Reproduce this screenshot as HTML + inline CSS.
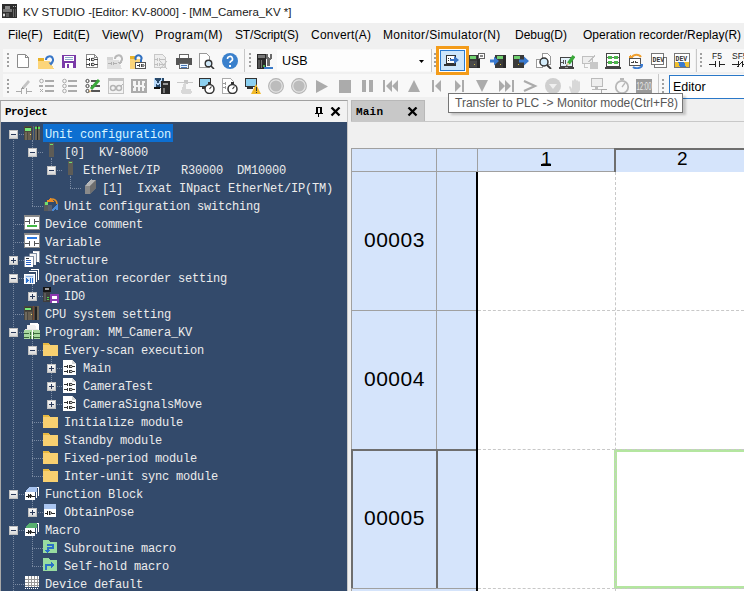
<!DOCTYPE html>
<html><head><meta charset="utf-8">
<style>
*{box-sizing:border-box;margin:0;padding:0}
html,body{width:744px;height:591px;overflow:hidden;background:#f0f0f0;font-family:"Liberation Sans",sans-serif;position:relative}
.a{position:absolute}
.t{position:absolute;white-space:pre;font-family:"Liberation Sans",sans-serif;font-size:12px;color:#000;line-height:14px;transform-origin:0 0}
#title{left:0;top:0;width:744px;height:23px;background:#fff}
#menu{left:0;top:23px;width:744px;height:25px;background:#f0f0f0}
.tb{position:absolute;background:#f8f8f8}
.grip{position:absolute;width:2px;height:2px;background:#9a9a9a;box-shadow:0 4px #9a9a9a,0 8px #9a9a9a,0 12px #9a9a9a}
.sep{position:absolute;width:1px;background:#c8c8c8}
.ic{position:absolute;width:16px;height:16px}
#tree{left:1px;top:122px;width:346px;height:469px;background:#334a6b}
.tr{position:absolute;white-space:pre;font-family:"Liberation Mono",monospace;font-size:12px;letter-spacing:-0.2px;color:#ececec;line-height:23px;height:23px}
.bx{position:absolute;width:9px;height:9px;background:linear-gradient(#fafafa,#d8d8d8);border:1px solid #c0c0c0}
.bx::after{content:"";position:absolute;left:1px;top:3px;width:5px;height:1px;background:#2a3a5a}
.bx.p::before{content:"";position:absolute;left:3px;top:1px;width:1px;height:5px;background:#2a3a5a}
.sel{color:#d8f4ff}
.vl{position:absolute;width:1px;border-left:1px dotted #7a8aa2}
.hl{position:absolute;height:1px;border-top:1px dotted #7a8aa2}
</style></head><body>
<!-- title bar -->
<div id="title" class="a"></div>
<svg class="a" style="left:2px;top:4px" width="15" height="14" viewBox="0 0 15 14" shape-rendering="crispEdges"><rect width="15" height="14" fill="#2e2e2e"/><rect x="3" y="2" width="5" height="3" fill="#8a8a8a"/><rect x="1" y="5" width="9" height="3" fill="#777"/><rect x="1" y="9" width="2" height="4" fill="#666"/><rect x="4" y="9" width="3" height="4" fill="#5a5a5a"/><rect x="1" y="10" width="2" height="2" fill="#ddd"/><rect x="11" y="2" width="1" height="1" fill="#bbb"/><rect x="13" y="2" width="1" height="1" fill="#bbb"/><rect x="11" y="5" width="1" height="8" fill="#6a6a6a"/><rect x="13" y="5" width="1" height="8" fill="#5a5a5a"/></svg>
<div class="t" style="left:23px;top:5px;font-size:11.5px;color:#1a1a1a">KV STUDIO -[Editor: KV-8000] - [MM_Camera_KV *]</div>

<!-- menu -->
<div id="menu" class="a"></div>
<div class="t" style="left:8px;top:28px">File(F)</div>
<div class="t" style="left:53px;top:28px">Edit(E)</div>
<div class="t" style="left:102px;top:28px">View(V)</div>
<div class="t" style="left:155px;top:28px;letter-spacing:0.4px">Program(M)</div>
<div class="t" style="left:235px;top:28px;letter-spacing:-0.14px">ST/Script(S)</div>
<div class="t" style="left:311px;top:28px;letter-spacing:0.22px">Convert(A)</div>
<div class="t" style="left:383px;top:28px;letter-spacing:0.35px">Monitor/Simulator(N)</div>
<div class="t" style="left:515px;top:28px">Debug(D)</div>
<div class="t" style="left:583px;top:28px">Operation recorder/Replay(R)</div>

<!-- toolbars -->
<div class="tb" style="left:3px;top:49px;width:241px;height:23px"></div>
<div class="tb" style="left:245px;top:49px;width:186px;height:23px"></div>
<div class="tb" style="left:432px;top:49px;width:263px;height:23px"></div>
<div class="tb" style="left:697px;top:49px;width:47px;height:23px"></div>
<div class="tb" style="left:3px;top:74px;width:655px;height:23px"></div>
<div class="tb" style="left:659px;top:74px;width:85px;height:23px"></div>

<!--ICONS-->
<div class="a" style="left:7px;top:53px;width:2px;height:2px;background:#a0a0a0"></div><div class="a" style="left:7px;top:57px;width:2px;height:2px;background:#a0a0a0"></div><div class="a" style="left:7px;top:61px;width:2px;height:2px;background:#a0a0a0"></div><div class="a" style="left:7px;top:65px;width:2px;height:2px;background:#a0a0a0"></div>
<div class="a" style="left:7px;top:79px;width:2px;height:2px;background:#a0a0a0"></div><div class="a" style="left:7px;top:83px;width:2px;height:2px;background:#a0a0a0"></div><div class="a" style="left:7px;top:87px;width:2px;height:2px;background:#a0a0a0"></div><div class="a" style="left:7px;top:91px;width:2px;height:2px;background:#a0a0a0"></div>
<div class="a" style="left:244px;top:49px;width:1px;height:23px;background:#c8c8c8"></div>
<div class="a" style="left:249px;top:53px;width:2px;height:2px;background:#a0a0a0"></div><div class="a" style="left:249px;top:57px;width:2px;height:2px;background:#a0a0a0"></div><div class="a" style="left:249px;top:61px;width:2px;height:2px;background:#a0a0a0"></div><div class="a" style="left:249px;top:65px;width:2px;height:2px;background:#a0a0a0"></div>
<div class="a" style="left:431px;top:49px;width:1px;height:23px;background:#c8c8c8"></div>
<div class="a" style="left:434px;top:53px;width:2px;height:2px;background:#a0a0a0"></div><div class="a" style="left:434px;top:57px;width:2px;height:2px;background:#a0a0a0"></div><div class="a" style="left:434px;top:61px;width:2px;height:2px;background:#a0a0a0"></div><div class="a" style="left:434px;top:65px;width:2px;height:2px;background:#a0a0a0"></div>
<div class="a" style="left:696px;top:49px;width:1px;height:23px;background:#c8c8c8"></div>
<div class="a" style="left:700px;top:53px;width:2px;height:2px;background:#a0a0a0"></div><div class="a" style="left:700px;top:57px;width:2px;height:2px;background:#a0a0a0"></div><div class="a" style="left:700px;top:61px;width:2px;height:2px;background:#a0a0a0"></div><div class="a" style="left:700px;top:65px;width:2px;height:2px;background:#a0a0a0"></div>
<div class="a" style="left:658px;top:74px;width:1px;height:23px;background:#c8c8c8"></div>
<div class="a" style="left:662px;top:79px;width:2px;height:2px;background:#a0a0a0"></div><div class="a" style="left:662px;top:83px;width:2px;height:2px;background:#a0a0a0"></div><div class="a" style="left:662px;top:87px;width:2px;height:2px;background:#a0a0a0"></div><div class="a" style="left:662px;top:91px;width:2px;height:2px;background:#a0a0a0"></div>
<svg class="a" style="left:16px;top:53px" width="16" height="16" viewBox="0 0 16 16" shape-rendering="crispEdges"><path d="M1.5 1.5h8l3 3v10h-11z" fill="#fff" stroke="#8a8a8a" shape-rendering="auto"/><path d="M9.5 1.5v3h3" fill="none" stroke="#8a8a8a"/></svg>
<svg class="a" style="left:38px;top:53px" width="16" height="16" viewBox="0 0 16 16" shape-rendering="crispEdges"><path d="M0 5h5l1 1v10H0z" fill="#e8b228"/><path d="M0 8h12l4 8H0z" fill="#fcd57a"/><path d="M8 7a3.5 3.5 0 1 1 5 3" fill="none" stroke="#3876c8" stroke-width="2" shape-rendering="auto"/><path d="M10.5 9.5h5l-2.5 3z" fill="#3876c8" shape-rendering="auto"/></svg>
<svg class="a" style="left:62px;top:53px" width="16" height="16" viewBox="0 0 16 16" shape-rendering="crispEdges"><rect x="0" y="2" width="14" height="13" fill="#7a3aa8"/><rect x="2" y="3" width="10" height="5" fill="#fff"/><rect x="3" y="4" width="8" height="1" fill="#8aa8c8"/><rect x="3" y="6" width="8" height="1" fill="#8aa8c8"/><rect x="3" y="10" width="8" height="5" fill="#fff"/><rect x="5" y="11" width="2" height="4" fill="#7a3aa8"/></svg>
<svg class="a" style="left:85px;top:53px" width="16" height="16" viewBox="0 0 16 16" shape-rendering="crispEdges"><path d="M1.5 1.5h8l3 3v10h-11z" fill="#fff" stroke="#8a8a8a"/><path d="M9.5 1.5v3h3" fill="none" stroke="#8a8a8a"/><path d="M1 6h3M4 5v3M6 5v3M6 6h1M9 6h4M1 11h3M4 10v3M6 10v3M6 11h1M9 11h4" stroke="#444"/><circle cx="8" cy="6.5" r="1.3" fill="none" stroke="#444" shape-rendering="auto"/><circle cx="8" cy="11.5" r="1.3" fill="none" stroke="#444" shape-rendering="auto"/></svg>
<svg class="a" style="left:107px;top:53px" width="16" height="16" viewBox="0 0 16 16" shape-rendering="crispEdges"><path d="M0 4h5l1 1v11H0z" fill="#d4d4d4"/><path d="M0 7h12l3 9H0z" fill="#e0e0e0"/><path d="M8 6a3.5 3.5 0 1 1 5 3" fill="none" stroke="#b8b8b8" stroke-width="2" shape-rendering="auto"/><path d="M10.5 8.5h5l-2.5 3z" fill="#b8b8b8"/><path d="M1 10h3M4 9v3M6 9v3M6 10h4" stroke="#b0b0b0"/></svg>
<svg class="a" style="left:130px;top:53px" width="16" height="16" viewBox="0 0 16 16" shape-rendering="crispEdges"><path d="M0 3h4l1 1v10H0z" fill="#e8b228"/><path d="M0 6h10v10H0z" fill="#fcd57a"/><path d="M6 7a3 3 0 1 1 5 0v3" fill="none" stroke="#3070c0" stroke-width="2" shape-rendering="auto"/><rect x="5.5" y="9.5" width="10" height="6" fill="#fff" stroke="#555"/><path d="M7 12.5h2M9 11v3M11 11v3" stroke="#444"/><circle cx="13" cy="12.5" r="1" fill="none" stroke="#444" shape-rendering="auto"/></svg>
<svg class="a" style="left:153px;top:53px" width="16" height="16" viewBox="0 0 16 16" shape-rendering="crispEdges"><path d="M1.5 1.5h8l3 3v10h-11z" fill="#eee" stroke="#c8c8c8"/><path d="M1 6h3M4 5v3M6 5v3M6 6h6M1 11h3M4 10v3M6 10v3M6 11h6" stroke="#c0c0c0"/><path d="M7 8l7 8M14 8l-7 8" stroke="#c0c0c0" shape-rendering="auto"/></svg>
<svg class="a" style="left:176px;top:53px" width="16" height="16" viewBox="0 0 16 16" shape-rendering="crispEdges"><rect x="3.5" y="1.5" width="9" height="4" fill="#fff" stroke="#666"/><rect x="0" y="5" width="16" height="7" fill="#555"/><rect x="3.5" y="10.5" width="9" height="5" fill="#e8f4ff" stroke="#666"/><path d="M5 12h6M5 14h6" stroke="#4a78b8"/></svg>
<svg class="a" style="left:199px;top:53px" width="16" height="16" viewBox="0 0 16 16" shape-rendering="crispEdges"><path d="M0.5 0.5h7l3 3v11h-10z" fill="#fff" stroke="#999"/><circle cx="9.5" cy="10.5" r="3.3" fill="#d0e8f8" stroke="#333" stroke-width="1.4" shape-rendering="auto"/><path d="M12 13l3 3" stroke="#333" stroke-width="1.6" shape-rendering="auto"/></svg>
<svg class="a" style="left:222px;top:53px" width="16" height="16" viewBox="0 0 16 16" shape-rendering="crispEdges"><circle cx="8" cy="8" r="8" fill="#3a80cc" shape-rendering="auto"/><path d="M5.5 6a2.5 2.5 0 1 1 3.5 2.2c-0.8 0.4-1 0.8-1 1.8" fill="none" stroke="#fff" stroke-width="1.6" shape-rendering="auto"/><rect x="7" y="11.5" width="2" height="2" fill="#fff"/></svg>
<svg class="a" style="left:257px;top:53px" width="16" height="16" viewBox="0 0 16 16" shape-rendering="crispEdges"><rect x="0" y="1" width="9" height="15" fill="#2a2a2a"/><rect x="1" y="2" width="7" height="3" fill="#777"/><rect x="1" y="7" width="2" height="8" fill="#555"/><rect x="4" y="7" width="1" height="8" fill="#777"/><rect x="6" y="12" width="2" height="2" fill="#4caf50"/><path d="M9 1h2v3l1 1 1-1V1h2v4l-2 2v6h-3V7L9 5z" fill="#6a6a6a"/><rect x="7" y="14" width="9" height="2" fill="#3a7ac8"/></svg>
<div class="a" style="left:277px;top:50px;width:154px;height:21px;background:#fdfdfd"></div>
<div class="t" style="left:282px;top:54px;font-size:12.5px">USB</div>
<svg class="a" style="left:419px;top:60px" width="5" height="3" viewBox="0 0 5 3" shape-rendering="crispEdges"><path d="M0 0h5l-2.5 3z" fill="#000" shape-rendering="auto"/></svg>
<div class="a" style="left:436px;top:46px;width:33px;height:29px;border:3px solid #f39c1b;background:#fff"></div>
<div class="a" style="left:440px;top:50px;width:25px;height:21px;border:1px solid #2a7ad0;background:#cde6fb"></div>
<svg class="a" style="left:444px;top:54px" width="16" height="13" viewBox="0 0 16 13" shape-rendering="crispEdges"><rect x="2.5" y="1.5" width="9" height="8" fill="#fff" stroke="#333"/><rect x="0" y="10" width="12" height="2" fill="#333"/><path d="M4 4v1M4 6v1M6 4v1M6 6v1" stroke="#333"/><path d="M6 5h4V2l5 4-5 4V7H6z" fill="#3a74c4" shape-rendering="auto"/></svg>
<svg class="a" style="left:469px;top:53px" width="16" height="16" viewBox="0 0 16 16" shape-rendering="crispEdges"><rect x="0" y="2" width="11" height="13" fill="#3a3a3a"/><rect x="1" y="3" width="6" height="3" fill="#6fd06f"/><rect x="1" y="8" width="7" height="6" fill="#4a4a4a"/><rect x="5" y="11" width="1" height="1" fill="#d8c040"/><rect x="8" y="2" width="3" height="13" fill="#2a2a2a"/><rect x="9.5" y="0.5" width="6" height="5" rx="1" fill="#fff" stroke="#666"/><path d="M11 2h3M11 3.5h3" stroke="#888"/></svg>
<svg class="a" style="left:490px;top:53px" width="16" height="16" viewBox="0 0 16 16" shape-rendering="crispEdges"><rect x="5" y="2" width="11" height="13" fill="#3a3a3a"/><rect x="7" y="3" width="6" height="3" fill="#6fd06f"/><rect x="13" y="2" width="3" height="13" fill="#2a2a2a"/><rect x="10" y="11" width="1" height="1" fill="#d8c040"/><path d="M0 6.5h4V3.5l5 4.5-5 4.5V9.5H0z" fill="#3a7ad0" shape-rendering="auto"/></svg>
<svg class="a" style="left:513px;top:53px" width="16" height="16" viewBox="0 0 16 16" shape-rendering="crispEdges"><rect x="0" y="2" width="11" height="13" fill="#3a3a3a"/><rect x="1" y="3" width="6" height="3" fill="#6fd06f"/><rect x="5" y="11" width="1" height="1" fill="#d8c040"/><path d="M6 6.5h5V3.5l5 4.5-5 4.5V9.5H6z" fill="#3a7ad0" shape-rendering="auto"/></svg>
<svg class="a" style="left:536px;top:53px" width="16" height="16" viewBox="0 0 16 16" shape-rendering="crispEdges"><path d="M6.5 0.5h5l3 3v8h-8z" fill="#fff" stroke="#999"/><path d="M0.5 6.5h6v8h-6z" fill="#fff" stroke="#999"/><circle cx="8" cy="9" r="4" fill="#d4ecfa" stroke="#333" stroke-width="1.5" shape-rendering="auto"/><path d="M11 12l4 4" stroke="#333" stroke-width="1.8" shape-rendering="auto"/></svg>
<svg class="a" style="left:559px;top:53px" width="16" height="17" viewBox="0 0 16 17" shape-rendering="crispEdges"><rect x="1.5" y="4.5" width="12" height="9" fill="#e4f2fa" stroke="#444"/><path d="M2 9h2M4 7v4M6 7v4M6 9h1" stroke="#555"/><rect x="0" y="14" width="15" height="2" fill="#444"/><rect x="6" y="14" width="3" height="1" fill="#999"/><path d="M9.5 10.5L15 3" stroke="#3aa83a" stroke-width="3.5" shape-rendering="auto"/><path d="M7 13l1.5-3.5 2 1.8z" fill="#f0d0a0" shape-rendering="auto"/><path d="M7 13l0.8-1.6 0.9 0.8z" fill="#111" shape-rendering="auto"/></svg>
<svg class="a" style="left:582px;top:53px" width="16" height="16" viewBox="0 0 16 16" shape-rendering="crispEdges"><rect x="0.5" y="3.5" width="10" height="7" fill="#eee" stroke="#c0c0c0"/><path d="M6 9l6-7 1 1-6 7z" fill="#c0c0c0"/><rect x="8" y="9" width="8" height="7" fill="#c8c8c8"/><path d="M2 11v3h4" stroke="#c8c8c8" fill="none"/></svg>
<svg class="a" style="left:605px;top:53px" width="16" height="17" viewBox="0 0 16 17" shape-rendering="crispEdges"><rect x="1.5" y="0.5" width="13" height="13" fill="#fff" stroke="#444"/><rect x="0" y="14" width="16" height="2" fill="#444"/><path d="M2 4.5h12M2 9.5h12" stroke="#666"/><rect x="3" y="3" width="4" height="3" fill="#4cb84c"/><rect x="9" y="3" width="4" height="3" fill="#4cb84c"/><rect x="3" y="8" width="4" height="3" fill="#4cb84c"/><rect x="9" y="8" width="4" height="3" fill="#4cb84c"/></svg>
<svg class="a" style="left:628px;top:53px" width="16" height="16" viewBox="0 0 16 16" shape-rendering="crispEdges"><rect x="1.5" y="5.5" width="11" height="7" fill="#fff" stroke="#555"/><path d="M3 9h2M5 8v2M7 8v2M7 9h3" stroke="#444"/><path d="M4 4a5 4 0 0 1 9 0" fill="none" stroke="#f0a030" stroke-width="2" shape-rendering="auto"/><path d="M2 2l3 3H1z" fill="#f0a030"/><path d="M5 14a5 3 0 0 0 9-2" fill="none" stroke="#3a7ad0" stroke-width="2" shape-rendering="auto"/><path d="M12 11l3 0-1 3z" fill="#3a7ad0"/></svg>
<svg class="a" style="left:651px;top:53px" width="16" height="16" viewBox="0 0 16 16" shape-rendering="crispEdges"><rect x="3.5" y="4.5" width="12" height="10" fill="#fff" stroke="#777"/><rect x="0.5" y="0.5" width="12" height="11" fill="#fff" stroke="#777"/><text x="1.5" y="8.5" font-family="Liberation Mono" font-weight="bold" font-size="6.5" fill="#333">DEV</text></svg>
<svg class="a" style="left:674px;top:53px" width="16" height="16" viewBox="0 0 16 16" shape-rendering="crispEdges"><rect x="0.5" y="0.5" width="15" height="14" fill="#fff" stroke="#777"/><rect x="1" y="9" width="14" height="5" fill="#f0c030"/><path d="M4 9h6l2 5H6z" fill="#3a7ad0"/><text x="1.5" y="7.5" font-family="Liberation Mono" font-weight="bold" font-size="6.5" fill="#333">DEV</text></svg>
<svg class="a" style="left:709px;top:51px" width="16" height="18" viewBox="0 0 16 18" shape-rendering="crispEdges"><text x="3" y="7.5" font-family="Liberation Sans" font-size="8.5" fill="#222">F5</text><path d="M0 13h6M6 10v6M10 10v6M10 13h6" stroke="#222"/></svg>
<svg class="a" style="left:732px;top:51px" width="16" height="18" viewBox="0 0 16 18" shape-rendering="crispEdges"><text x="0" y="7.5" font-family="Liberation Sans" font-size="8.5" fill="#222">SF5</text><path d="M0 13h6M6 10v6M10 10v6M10 13h6M5 16l6-6" stroke="#222"/></svg>
<svg class="a" style="left:16px;top:78px" width="16" height="16" viewBox="0 0 16 16" shape-rendering="crispEdges"><path d="M6 9l6-7 2 2-6 7z" fill="#c4c4c4" shape-rendering="auto"/><path d="M5 11l1-2 2 2z" fill="#999"/><path d="M0 13h5M5 10v6M10 10v6M10 13h6" stroke="#ababab"/></svg>
<svg class="a" style="left:39px;top:78px" width="16" height="16" viewBox="0 0 16 16" shape-rendering="crispEdges"><circle cx="2.5" cy="3" r="1.8" fill="none" stroke="#ababab" shape-rendering="auto"/><rect x="6" y="2" width="9" height="2" fill="#ababab"/><rect x="0" y="7" width="4" height="2" fill="#ababab"/><rect x="6" y="7" width="9" height="2" fill="#ababab"/><path d="M1 11l3 3M4 11l-3 3" stroke="#ababab" shape-rendering="auto"/><rect x="6" y="12" width="9" height="2" fill="#ababab"/></svg>
<svg class="a" style="left:62px;top:78px" width="16" height="16" viewBox="0 0 16 16" shape-rendering="crispEdges"><circle cx="2.5" cy="3" r="1.8" fill="none" stroke="#ababab" shape-rendering="auto"/><rect x="6" y="2" width="9" height="2" fill="#ababab"/><circle cx="2.5" cy="8" r="1.8" fill="none" stroke="#ababab" shape-rendering="auto"/><rect x="6" y="7" width="9" height="2" fill="#ababab"/><circle cx="2.5" cy="13" r="1.8" fill="none" stroke="#ababab" shape-rendering="auto"/><rect x="6" y="12" width="9" height="2" fill="#ababab"/></svg>
<svg class="a" style="left:85px;top:78px" width="16" height="16" viewBox="0 0 16 16" shape-rendering="crispEdges"><circle cx="2.5" cy="3" r="1.6" fill="none" stroke="#444" shape-rendering="auto"/><rect x="6" y="2" width="8" height="2" fill="#555"/><circle cx="2.5" cy="8" r="1.6" fill="none" stroke="#444" shape-rendering="auto"/><rect x="6" y="7" width="9" height="2" fill="#555"/><circle cx="2.5" cy="13" r="1.6" fill="none" stroke="#444" shape-rendering="auto"/><rect x="6" y="12" width="9" height="2" fill="#555"/><path d="M6 11L14 2" stroke="#3aa83a" stroke-width="3" shape-rendering="auto"/><path d="M3.5 14.5l1-3 2 2z" fill="#e8c080" shape-rendering="auto"/><path d="M3.5 14.5l0.5-1.2 0.8 0.8z" fill="#333" shape-rendering="auto"/></svg>
<svg class="a" style="left:108px;top:78px" width="16" height="16" viewBox="0 0 16 16" shape-rendering="crispEdges"><rect x="0.5" y="0.5" width="15" height="15" fill="#f4f4f4" stroke="#c4c4c4"/><rect x="0" y="0" width="16" height="3" fill="#c4c4c4"/><circle cx="5" cy="10" r="2.5" fill="none" stroke="#b4b4b4" stroke-width="1.4" shape-rendering="auto"/><circle cx="11" cy="10" r="2.5" fill="none" stroke="#b4b4b4" stroke-width="1.4" shape-rendering="auto"/><path d="M13 8l2-2" stroke="#b4b4b4"/></svg>
<svg class="a" style="left:131px;top:78px" width="16" height="16" viewBox="0 0 16 16" shape-rendering="crispEdges"><path d="M0 1h16v14H0z" fill="#ababab"/><path d="M2 3h3v4h2V3h2v4h2V3h3v2h-1v3h1v2h-1v3h-2V9H9v4H7V9H5v4H2v-3h1V8H2z" fill="#f4f4f4"/></svg>
<svg class="a" style="left:154px;top:78px" width="16" height="16" viewBox="0 0 16 16" shape-rendering="crispEdges"><rect x="0" y="0" width="10" height="10" fill="#2a4a6a"/><path d="M1 9V2l3 5 3-5v7" fill="none" stroke="#b8d8f8" stroke-width="1.2"/><rect x="0" y="9" width="6" height="2" fill="#111"/><rect x="7" y="3" width="9" height="13" fill="#2a2a2a"/><rect x="9" y="5" width="5" height="2" fill="#999"/><rect x="9" y="10" width="2" height="5" fill="#777"/></svg>
<svg class="a" style="left:177px;top:78px" width="16" height="16" viewBox="0 0 16 16" shape-rendering="crispEdges"><path d="M0 4h16M7 2h3v3H7z" stroke="#c8c8c8" fill="#c8c8c8"/><path d="M7 5h2v6l4 0c2 1 2 4 1 5H5l-1-3z" fill="#d8d8d8"/></svg>
<svg class="a" style="left:199px;top:78px" width="16" height="16" viewBox="0 0 16 16" shape-rendering="crispEdges"><rect x="0.5" y="0.5" width="11" height="8" fill="#8cd0f0" stroke="#333"/><rect x="3" y="9" width="4" height="2" fill="#333"/><circle cx="10.5" cy="11" r="4.5" fill="#fff" stroke="#333" stroke-width="1.5" shape-rendering="auto"/><rect x="9.0" y="4.0" width="3" height="1.5" fill="#333"/><path d="M10.5 11l2-2.5" stroke="#333" stroke-width="1.2" shape-rendering="auto"/></svg>
<svg class="a" style="left:222px;top:78px" width="16" height="16" viewBox="0 0 16 16" shape-rendering="crispEdges"><path d="M0.5 0.5h8l3 3v12h-11z" fill="#fff" stroke="#aaa"/><path d="M1 5h2M1 9h2M3 4v3M3 8v3" stroke="#999"/><circle cx="10.5" cy="11" r="4.5" fill="#fff" stroke="#333" stroke-width="1.5" shape-rendering="auto"/><rect x="9.0" y="4.0" width="3" height="1.5" fill="#333"/><path d="M10.5 11l2-2.5" stroke="#333" stroke-width="1.2" shape-rendering="auto"/></svg>
<svg class="a" style="left:245px;top:78px" width="16" height="16" viewBox="0 0 16 16" shape-rendering="crispEdges"><rect x="0.5" y="0.5" width="11" height="8" fill="#8cd0f0" stroke="#333"/><rect x="2" y="9" width="6" height="2" fill="#333"/><path d="M11 6l5 10H6z" fill="#f0b828" shape-rendering="auto"/><rect x="10.5" y="9" width="1.2" height="4" fill="#333"/><rect x="10.5" y="14" width="1.2" height="1" fill="#333"/></svg>
<svg class="a" style="left:268px;top:78px" width="16" height="16" viewBox="0 0 16 16" shape-rendering="crispEdges"><circle cx="8" cy="8" r="7.4" fill="#e4e4e4" stroke="#b4b4b4" stroke-width="1.1" shape-rendering="auto"/><circle cx="8" cy="8" r="5.6" fill="#bcbcbc" shape-rendering="auto"/></svg>
<svg class="a" style="left:291px;top:78px" width="16" height="16" viewBox="0 0 16 16" shape-rendering="crispEdges"><circle cx="8" cy="8" r="7.4" fill="#e4e4e4" stroke="#b4b4b4" stroke-width="1.1" shape-rendering="auto"/><circle cx="8" cy="8" r="5.6" fill="#bcbcbc" shape-rendering="auto"/></svg>
<svg class="a" style="left:315px;top:78px" width="16" height="16" viewBox="0 0 16 16" shape-rendering="crispEdges"><path d="M1 2l12 6.5-12 6.5z" fill="#ababab" shape-rendering="auto"/></svg>
<svg class="a" style="left:338px;top:78px" width="16" height="16" viewBox="0 0 16 16" shape-rendering="crispEdges"><rect x="1" y="2" width="12" height="13" fill="#ababab"/></svg>
<svg class="a" style="left:361px;top:78px" width="16" height="16" viewBox="0 0 16 16" shape-rendering="crispEdges"><rect x="1" y="2" width="4" height="12" fill="#ababab"/><rect x="8" y="2" width="4" height="12" fill="#ababab"/></svg>
<svg class="a" style="left:383px;top:78px" width="16" height="16" viewBox="0 0 16 16" shape-rendering="crispEdges"><rect x="0" y="2" width="2" height="12" fill="#ababab"/><path d="M9 2l-6 6 6 6zM15 2l-6 6 6 6z" fill="#ababab" shape-rendering="auto"/></svg>
<svg class="a" style="left:407px;top:78px" width="16" height="16" viewBox="0 0 16 16" shape-rendering="crispEdges"><path d="M7 2l6 12H1z" fill="#ababab" shape-rendering="auto"/></svg>
<svg class="a" style="left:432px;top:78px" width="16" height="16" viewBox="0 0 16 16" shape-rendering="crispEdges"><rect x="0" y="2" width="2" height="12" fill="#ababab"/><path d="M9 2l-6 6 6 6z" fill="#ababab" shape-rendering="auto"/></svg>
<svg class="a" style="left:455px;top:78px" width="16" height="16" viewBox="0 0 16 16" shape-rendering="crispEdges"><rect x="7" y="2" width="2" height="12" fill="#ababab"/><path d="M0 2l6 6-6 6z" fill="#ababab" shape-rendering="auto"/></svg>
<svg class="a" style="left:476px;top:78px" width="16" height="16" viewBox="0 0 16 16" shape-rendering="crispEdges"><path d="M0 2h12L6 14z" fill="#ababab" shape-rendering="auto"/></svg>
<svg class="a" style="left:499px;top:78px" width="16" height="16" viewBox="0 0 16 16" shape-rendering="crispEdges"><path d="M0 2l6 6-6 6zM6 2l6 6-6 6z" fill="#ababab" shape-rendering="auto"/><rect x="13" y="2" width="2" height="12" fill="#ababab"/></svg>
<svg class="a" style="left:522px;top:78px" width="16" height="16" viewBox="0 0 16 16" shape-rendering="crispEdges"><path d="M2 3l11 5-11 5" fill="none" stroke="#ababab" stroke-width="2.2" shape-rendering="auto"/></svg>
<svg class="a" style="left:545px;top:78px" width="16" height="16" viewBox="0 0 16 16" shape-rendering="crispEdges"><circle cx="8" cy="8" r="8" fill="#cfcfcf" shape-rendering="auto"/><path d="M4 6h8l-4 5z" fill="#f0f0f0" shape-rendering="auto"/></svg>
<svg class="a" style="left:568px;top:78px" width="16" height="16" viewBox="0 0 16 16" shape-rendering="crispEdges"><path d="M3 15L1 9c0-1 1-1 2 0l1 2V3c0-1 2-1 2 0v5V2c0-1 2-1 2 0v6V3c0-1 2-1 2 0v5V4c0-1 2-1 2 0v8l-2 3z" fill="#d8d8d8" shape-rendering="auto"/></svg>
<svg class="a" style="left:591px;top:78px" width="16" height="16" viewBox="0 0 16 16" shape-rendering="crispEdges"><rect x="0.5" y="0.5" width="11" height="8" fill="#eee" stroke="#bbb"/><rect x="4" y="9" width="3" height="2" fill="#bbb"/><rect x="1" y="11" width="9" height="1" fill="#bbb"/><path d="M6 16h4v-5h6" fill="none" stroke="#aaa"/></svg>
<svg class="a" style="left:614px;top:78px" width="16" height="16" viewBox="0 0 16 16" shape-rendering="crispEdges"><circle cx="8" cy="9" r="6.2" fill="none" stroke="#b8b8b8" stroke-width="1.8" shape-rendering="auto"/><rect x="6" y="0" width="4" height="2" fill="#b8b8b8"/><path d="M8 9l3-4" stroke="#b8b8b8" stroke-width="1.3" shape-rendering="auto"/></svg>
<svg class="a" style="left:636px;top:78px" width="16" height="16" viewBox="0 0 16 16" shape-rendering="crispEdges"><rect x="0" y="1" width="16" height="14" fill="#9a9a9a"/><text x="0.5" y="12" font-family="Liberation Sans" font-size="10" fill="#eaeaea" textLength="15" lengthAdjust="spacingAndGlyphs">12:00</text></svg>
<div class="a" style="left:669px;top:75px;width:80px;height:24px;border:1px solid #2a78c8;background:#fff"></div>
<div class="t" style="left:673px;top:80px;font-size:12.5px">Editor</div>

<!--/ICONS-->
<!-- left pane -->
<div class="a" style="left:0;top:100px;width:348px;height:491px;background:#f2f2f2;border-top:1px solid #a0a0a0;border-left:1px solid #a8a8a8;border-right:1px solid #c8c8c8"></div>
<div class="t" style="left:5px;top:105px;font-family:'Liberation Mono',monospace;font-weight:bold;font-size:11px;letter-spacing:-0.6px">Project</div>
<div id="tree" class="a"></div>
<!--TREE-->
<div class="vl" style="left:13px;top:134px;height:457px"></div>
<div class="vl" style="left:32px;top:140px;height:66px"></div>
<div class="vl" style="left:51px;top:158px;height:12px"></div>
<div class="vl" style="left:70px;top:176px;height:12px"></div>
<div class="vl" style="left:32px;top:284px;height:12px"></div>
<div class="vl" style="left:32px;top:338px;height:138px"></div>
<div class="vl" style="left:51px;top:356px;height:48px"></div>
<div class="vl" style="left:32px;top:500px;height:12px"></div>
<div class="vl" style="left:32px;top:536px;height:30px"></div>
<div class="hl" style="left:13px;top:134px;width:11px"></div>
<div class="hl" style="left:32px;top:152px;width:11px"></div>
<div class="hl" style="left:51px;top:170px;width:11px"></div>
<div class="hl" style="left:70px;top:188px;width:11px"></div>
<div class="hl" style="left:32px;top:206px;width:11px"></div>
<div class="hl" style="left:13px;top:224px;width:11px"></div>
<div class="hl" style="left:13px;top:242px;width:11px"></div>
<div class="hl" style="left:13px;top:260px;width:11px"></div>
<div class="hl" style="left:13px;top:278px;width:11px"></div>
<div class="hl" style="left:32px;top:296px;width:11px"></div>
<div class="hl" style="left:13px;top:314px;width:11px"></div>
<div class="hl" style="left:13px;top:332px;width:11px"></div>
<div class="hl" style="left:32px;top:350px;width:11px"></div>
<div class="hl" style="left:51px;top:368px;width:11px"></div>
<div class="hl" style="left:51px;top:386px;width:11px"></div>
<div class="hl" style="left:51px;top:404px;width:11px"></div>
<div class="hl" style="left:32px;top:422px;width:11px"></div>
<div class="hl" style="left:32px;top:440px;width:11px"></div>
<div class="hl" style="left:32px;top:458px;width:11px"></div>
<div class="hl" style="left:32px;top:476px;width:11px"></div>
<div class="hl" style="left:13px;top:494px;width:11px"></div>
<div class="hl" style="left:32px;top:512px;width:11px"></div>
<div class="hl" style="left:13px;top:530px;width:11px"></div>
<div class="hl" style="left:32px;top:548px;width:11px"></div>
<div class="hl" style="left:32px;top:566px;width:11px"></div>
<div class="hl" style="left:13px;top:584px;width:11px"></div>
<div class="bx" style="left:9px;top:130px"></div>
<div class="bx" style="left:28px;top:148px"></div>
<div class="bx" style="left:47px;top:166px"></div>
<div class="bx p" style="left:9px;top:256px"></div>
<div class="bx" style="left:9px;top:274px"></div>
<div class="bx p" style="left:28px;top:292px"></div>
<div class="bx" style="left:9px;top:328px"></div>
<div class="bx" style="left:28px;top:346px"></div>
<div class="bx p" style="left:47px;top:364px"></div>
<div class="bx p" style="left:47px;top:382px"></div>
<div class="bx p" style="left:47px;top:400px"></div>
<div class="bx" style="left:9px;top:490px"></div>
<div class="bx p" style="left:28px;top:508px"></div>
<div class="bx" style="left:9px;top:526px"></div>
<svg class="a" style="left:24px;top:125px" width="16" height="16" viewBox="0 0 16 16" shape-rendering="crispEdges"><rect x="0" y="1" width="8" height="14" fill="#4e4a40"/><rect x="1" y="2" width="6" height="4" fill="#3a3a30"/><rect x="1" y="3" width="6" height="3" fill="#78e878"/><rect x="1" y="7" width="2" height="8" fill="#6e6a58"/><rect x="4" y="7" width="3" height="8" fill="#6a6050"/><rect x="6" y="9" width="1" height="1" fill="#f0e080"/><rect x="9" y="1" width="1" height="14" fill="#6a6a60"/><rect x="11" y="1" width="2" height="14" fill="#6a6456"/><rect x="11" y="2" width="2" height="2" fill="#5ae05a"/><rect x="14" y="1" width="2" height="14" fill="#6a6456"/><rect x="14" y="2" width="2" height="2" fill="#5ae05a"/><rect x="13" y="1" width="1" height="14" fill="#2a2a26"/></svg>
<svg class="a" style="left:43px;top:143px" width="16" height="16" viewBox="0 0 16 16" shape-rendering="crispEdges"><rect x="6" y="0" width="5" height="14" fill="#5e5c56"/><rect x="7" y="1" width="3" height="1" fill="#6fe06f"/></svg>
<svg class="a" style="left:62px;top:161px" width="16" height="16" viewBox="0 0 16 16" shape-rendering="crispEdges"><rect x="6" y="0" width="5" height="14" fill="#5e5c56"/><rect x="7" y="1" width="3" height="1" fill="#6fe06f"/></svg>
<svg class="a" style="left:81px;top:179px" width="16" height="16" viewBox="0 0 16 16" shape-rendering="crispEdges"><path d="M4 7l6-6h5v8l-6 6H4z" fill="#8a8a8a" shape-rendering="auto"/><path d="M4 7l6-6h5l-6 6z" fill="#b4b4b4" shape-rendering="auto"/><path d="M9 7l6-6v8l-6 6z" fill="#6e6e6e" shape-rendering="auto"/><path d="M6 5l5-5" stroke="#ddd" stroke-width="0.6" shape-rendering="auto"/></svg>
<svg class="a" style="left:43px;top:197px" width="16" height="16" viewBox="0 0 16 16" shape-rendering="crispEdges"><rect x="1" y="5" width="4" height="9" fill="#5a5a5a"/><rect x="2" y="5" width="3" height="3" fill="#6fe06f"/><path d="M4 4h5l-2-2" fill="none" stroke="#f08a20" stroke-width="2"/><path d="M8 2c4 0 6 2 6 5" fill="none" stroke="#e0902a" stroke-width="1.5" shape-rendering="auto"/><rect x="5" y="8" width="4" height="6" fill="#5a6070"/><path d="M9 14l5-5v4" fill="none" stroke="#4a8ad8" stroke-width="2"/></svg>
<svg class="a" style="left:24px;top:215px" width="16" height="16" viewBox="0 0 16 16" shape-rendering="crispEdges"><rect x="0" y="0" width="16" height="15" fill="#8a8a8a"/><rect x="1" y="2" width="14" height="12" fill="#fff"/><path d="M1 6h4M11 6h4M5 4v5M10 4v5" stroke="#555"/><rect x="3" y="10" width="10" height="2" fill="#44b844"/></svg>
<svg class="a" style="left:24px;top:233px" width="16" height="16" viewBox="0 0 16 16" shape-rendering="crispEdges"><rect x="0" y="0" width="16" height="15" fill="#8a8a8a"/><rect x="1" y="2" width="14" height="12" fill="#fff"/><rect x="3" y="4" width="10" height="2" fill="#2a78e0"/><path d="M1 10h4M11 10h4M5 8v5M10 8v5" stroke="#555"/></svg>
<svg class="a" style="left:24px;top:251px" width="16" height="16" viewBox="0 0 16 16" shape-rendering="crispEdges"><path d="M9 0h6v11H9z" fill="#fff"/><path d="M9.5 0.5h6v11" fill="none" stroke="#ccc" stroke-width="0.6"/><path d="M5 2h7v12H5z" fill="#f4f4f4" stroke="#334a6b" stroke-width="0.6"/><path d="M0 5h9v11H0z" fill="#fff" stroke="#334a6b" stroke-width="0.6"/><path d="M2 7h3" stroke="#333"/><path d="M2 9h5M2 11h5M2 13h5" stroke="#2a60c0"/></svg>
<svg class="a" style="left:24px;top:269px" width="16" height="16" viewBox="0 0 16 16" shape-rendering="crispEdges"><path d="M6.5 0.5h8v10" fill="none" stroke="#fff"/><path d="M4.5 2.5h8v10" fill="none" stroke="#fff"/><rect x="0" y="5" width="11" height="10" fill="#fff"/><rect x="1" y="6" width="9" height="8" fill="#dce8f8"/><path d="M2 7h7" stroke="#8ab0e0"/><path d="M2 9l3 2.5-3 2.5z" fill="#2a70d0"/><path d="M6.5 9v5M8.5 9v5" stroke="#2a70d0"/></svg>
<svg class="a" style="left:43px;top:287px" width="16" height="16" viewBox="0 0 16 16" shape-rendering="crispEdges"><rect x="0" y="0" width="8" height="5" fill="#151515"/><rect x="2" y="1" width="4" height="2" fill="#999"/><rect x="0" y="5" width="7" height="10" fill="#3e3e3e"/><rect x="1" y="6" width="2" height="8" fill="#5a5a5a"/><rect x="4" y="10" width="2" height="1" fill="#50d050"/><rect x="4" y="12" width="2" height="1" fill="#50d050"/><rect x="7" y="7" width="9" height="9" fill="#8a38b0"/><rect x="9" y="9" width="5" height="3" fill="#fff"/><rect x="9" y="14" width="5" height="2" fill="#fff"/></svg>
<svg class="a" style="left:24px;top:305px" width="16" height="16" viewBox="0 0 16 16" shape-rendering="crispEdges"><rect x="0" y="1" width="15" height="14" fill="#4a4640"/><rect x="1" y="2" width="7" height="4" fill="#3a3a32"/><rect x="1" y="3" width="6" height="2" fill="#78e878"/><rect x="1" y="7" width="2" height="8" fill="#6e6a5e"/><rect x="4" y="7" width="4" height="8" fill="#686052"/><rect x="7" y="9" width="1" height="1" fill="#f0e070"/><rect x="9" y="1" width="1" height="14" fill="#7a4a30"/><rect x="11" y="2" width="2" height="13" fill="#202020"/><rect x="13" y="1" width="2" height="14" fill="#6a6456"/></svg>
<svg class="a" style="left:24px;top:323px" width="16" height="16" viewBox="0 0 16 16" shape-rendering="crispEdges"><path d="M6 0h7l2 2v8H6z" fill="#fff"/><path d="M3 2h7l2 2v8H3z" fill="#f0f0f0"/><path d="M1 6h13v2H1z" fill="#e8e8e8"/><rect x="0" y="7" width="16" height="9" fill="#a8d8a0"/><path d="M0 10h5M6 9v3M9 9v3M10 10h6M0 14h5M6 13v3M9 13v3M10 14h6" stroke="#3a6a3a"/><path d="M8 7v9" stroke="#fff"/></svg>
<svg class="a" style="left:43px;top:341px" width="16" height="16" viewBox="0 0 16 16" shape-rendering="crispEdges"><path d="M0 2h6l1 2h8v11H0z" fill="#f8d070"/><path d="M0 2h6l1 2H0z" fill="#e8b840"/></svg>
<svg class="a" style="left:62px;top:359px" width="16" height="16" viewBox="0 0 16 16" shape-rendering="crispEdges"><path d="M1 1h9l4 4v11H1z" fill="#fff"/><path d="M10 1v4h4" fill="#d8d8d8"/><path d="M2 7h3M5 6v3M7 6v3M10 7h3M2 12h3M5 11v3M7 11v3M10 12h3" stroke="#333"/><circle cx="9" cy="7.5" r="1.2" fill="none" stroke="#333" shape-rendering="auto"/><circle cx="9" cy="12.5" r="1.2" fill="none" stroke="#333" shape-rendering="auto"/></svg>
<svg class="a" style="left:62px;top:377px" width="16" height="16" viewBox="0 0 16 16" shape-rendering="crispEdges"><path d="M1 1h9l4 4v11H1z" fill="#fff"/><path d="M10 1v4h4" fill="#d8d8d8"/><path d="M2 7h3M5 6v3M7 6v3M10 7h3M2 12h3M5 11v3M7 11v3M10 12h3" stroke="#333"/><circle cx="9" cy="7.5" r="1.2" fill="none" stroke="#333" shape-rendering="auto"/><circle cx="9" cy="12.5" r="1.2" fill="none" stroke="#333" shape-rendering="auto"/></svg>
<svg class="a" style="left:62px;top:395px" width="16" height="16" viewBox="0 0 16 16" shape-rendering="crispEdges"><path d="M1 1h9l4 4v11H1z" fill="#fff"/><path d="M10 1v4h4" fill="#d8d8d8"/><path d="M2 7h3M5 6v3M7 6v3M10 7h3M2 12h3M5 11v3M7 11v3M10 12h3" stroke="#333"/><circle cx="9" cy="7.5" r="1.2" fill="none" stroke="#333" shape-rendering="auto"/><circle cx="9" cy="12.5" r="1.2" fill="none" stroke="#333" shape-rendering="auto"/></svg>
<svg class="a" style="left:43px;top:413px" width="16" height="16" viewBox="0 0 16 16" shape-rendering="crispEdges"><path d="M0 2h6l1 2h8v11H0z" fill="#f8d070"/><path d="M0 2h6l1 2H0z" fill="#e8b840"/></svg>
<svg class="a" style="left:43px;top:431px" width="16" height="16" viewBox="0 0 16 16" shape-rendering="crispEdges"><path d="M0 2h6l1 2h8v11H0z" fill="#f8d070"/><path d="M0 2h6l1 2H0z" fill="#e8b840"/></svg>
<svg class="a" style="left:43px;top:449px" width="16" height="16" viewBox="0 0 16 16" shape-rendering="crispEdges"><path d="M0 2h6l1 2h8v11H0z" fill="#f8d070"/><path d="M0 2h6l1 2H0z" fill="#e8b840"/></svg>
<svg class="a" style="left:43px;top:467px" width="16" height="16" viewBox="0 0 16 16" shape-rendering="crispEdges"><path d="M0 2h6l1 2h8v11H0z" fill="#f8d070"/><path d="M0 2h6l1 2H0z" fill="#e8b840"/></svg>
<svg class="a" style="left:24px;top:485px" width="16" height="16" viewBox="0 0 16 16" shape-rendering="crispEdges"><path d="M12 2h3v9h-3zM10 3h3v10h-3z" fill="#fff"/><path d="M13 3v8M11 4v9" stroke="#334a6b"/><path d="M2 5l3-3h8v5H2z" fill="#a8c4f0"/><rect x="1" y="7" width="10" height="8" fill="#fff"/><path d="M2 11h2M4 9v4M6 9v4M8 11h3" stroke="#222"/><circle cx="6.5" cy="11" r="1.1" fill="none" stroke="#222" shape-rendering="auto"/></svg>
<svg class="a" style="left:43px;top:503px" width="16" height="16" viewBox="0 0 16 16" shape-rendering="crispEdges"><rect x="1" y="1" width="12" height="5" fill="#a8c4f0"/><rect x="1" y="6" width="12" height="8" fill="#fff"/><path d="M2 10h2M4 8v4M6 8v4M9 10h3" stroke="#222"/><circle cx="7.5" cy="10" r="1.1" fill="none" stroke="#222" shape-rendering="auto"/></svg>
<svg class="a" style="left:24px;top:521px" width="16" height="16" viewBox="0 0 16 16" shape-rendering="crispEdges"><path d="M12 2h3v9h-3zM10 3h3v10h-3z" fill="#fff"/><path d="M13 3v8M11 4v9" stroke="#334a6b"/><path d="M2 5l3-3h8v5H2z" fill="#58b070"/><rect x="1" y="7" width="10" height="8" fill="#fff"/><path d="M2 11h2M4 9v4M6 9v4M8 11h3" stroke="#222"/><circle cx="6.5" cy="11" r="1.1" fill="none" stroke="#222" shape-rendering="auto"/></svg>
<svg class="a" style="left:43px;top:539px" width="16" height="16" viewBox="0 0 16 16" shape-rendering="crispEdges"><path d="M0 1h6l1 2h7v11H0z" fill="#98dca0"/><path d="M4 6h6v3H5v4" fill="none" stroke="#2a70c8" stroke-width="1.3"/><path d="M2 11h5l-2.5 3z" fill="#2a70c8"/></svg>
<svg class="a" style="left:43px;top:557px" width="16" height="16" viewBox="0 0 16 16" shape-rendering="crispEdges"><path d="M0 1h6l1 2h7v11H0z" fill="#98dca0"/><path d="M3 13V8h6" fill="none" stroke="#2a70c8" stroke-width="1.5"/><path d="M8 5l4 3-4 3z" fill="#2a70c8"/></svg>
<svg class="a" style="left:24px;top:575px" width="16" height="16" viewBox="0 0 16 16" shape-rendering="crispEdges"><rect x="1" y="1" width="14" height="11" fill="#fff"/><path d="M1 4h14M1 7h14M1 10h14M4 1v11M7 1v11M10 1v11M13 1v11" stroke="#999"/><path d="M1 13h14" stroke="#fff" stroke-dasharray="1 1"/></svg>
<div class="a" style="left:43px;top:124px;width:130px;height:18px;background:#0d6fd1"></div>
<div class="tr sel" style="left:45px;top:124px">Unit configuration</div>
<div class="tr" style="left:64px;top:142px">[0]  KV-8000</div>
<div class="tr" style="left:83px;top:160px">EtherNet/IP   R30000  DM10000</div>
<div class="tr" style="left:102px;top:178px">[1]  Ixxat INpact EtherNet/IP(TM)</div>
<div class="tr" style="left:64px;top:196px">Unit configuration switching</div>
<div class="tr" style="left:45px;top:214px">Device comment</div>
<div class="tr" style="left:45px;top:232px">Variable</div>
<div class="tr" style="left:45px;top:250px">Structure</div>
<div class="tr" style="left:45px;top:268px">Operation recorder setting</div>
<div class="tr" style="left:64px;top:286px">ID0</div>
<div class="tr" style="left:45px;top:304px">CPU system setting</div>
<div class="tr" style="left:45px;top:322px">Program: MM_Camera_KV</div>
<div class="tr" style="left:64px;top:340px">Every-scan execution</div>
<div class="tr" style="left:83px;top:358px">Main</div>
<div class="tr" style="left:83px;top:376px">CameraTest</div>
<div class="tr" style="left:83px;top:394px">CameraSignalsMove</div>
<div class="tr" style="left:64px;top:412px">Initialize module</div>
<div class="tr" style="left:64px;top:430px">Standby module</div>
<div class="tr" style="left:64px;top:448px">Fixed-period module</div>
<div class="tr" style="left:64px;top:466px">Inter-unit sync module</div>
<div class="tr" style="left:45px;top:484px">Function Block</div>
<div class="tr" style="left:64px;top:502px">ObtainPose</div>
<div class="tr" style="left:45px;top:520px">Macro</div>
<div class="tr" style="left:64px;top:538px">Subroutine macro</div>
<div class="tr" style="left:64px;top:556px">Self-hold macro</div>
<div class="tr" style="left:45px;top:574px">Device default</div>

<!--/TREE-->
<!-- editor area -->
<div class="a" style="left:351px;top:100px;width:74px;height:22px;background:#c8c8c8;border:1px solid #b8b8b8;border-bottom:none"></div>
<div class="t" style="left:356px;top:105px;font-family:'Liberation Mono',monospace;font-weight:bold;font-size:11px;letter-spacing:0.2px">Main</div>
<div class="a" style="left:351px;top:121px;width:393px;height:1px;background:#c8c8c8"></div>


<!-- grid -->
<div class="a" style="left:351px;top:148px;width:393px;height:443px;background:#fff"></div>
<div class="a" style="left:351px;top:148px;width:126px;height:443px;background:#d5e4fb"></div>
<div class="a" style="left:477px;top:148px;width:267px;height:24px;background:#d5e4fb"></div>
<!-- header borders -->
<div class="a" style="left:351px;top:148px;width:264px;height:1px;background:#a0a0a0"></div>
<div class="a" style="left:351px;top:148px;width:1px;height:443px;background:#a0a0a0"></div>
<div class="a" style="left:351px;top:171px;width:264px;height:1px;background:#a0a0a0"></div>
<div class="a" style="left:436px;top:148px;width:1px;height:302px;background:#a0a0a0"></div>
<div class="a" style="left:477px;top:148px;width:1px;height:24px;background:#a0a0a0"></div>
<!-- col2 header selected -->
<div class="a" style="left:614px;top:148px;width:130px;height:2px;background:#6e6e6e"></div>
<div class="a" style="left:614px;top:148px;width:2px;height:24px;background:#6e6e6e"></div>
<!-- row lines in left cols -->
<div class="a" style="left:351px;top:310px;width:126px;height:1px;background:#a0a0a0"></div>
<!-- row 5 selected border -->
<div class="a" style="left:351px;top:449px;width:126px;height:2px;background:#6e6e6e"></div>
<div class="a" style="left:351px;top:449px;width:2px;height:139px;background:#6e6e6e"></div>
<div class="a" style="left:436px;top:449px;width:2px;height:139px;background:#6e6e6e"></div>
<div class="a" style="left:351px;top:588px;width:126px;height:1px;background:#a0a0a0"></div>
<!-- thick black -->
<div class="a" style="left:476px;top:172px;width:2px;height:419px;background:#000"></div>
<!-- green selection -->
<div class="a" style="left:614px;top:449px;width:140px;height:140px;border:3px solid #b4e6a0"></div>
<!-- dashed grid in white area -->
<div class="a" style="left:478px;top:310px;width:266px;height:0;border-top:1px dashed #c8c8c8"></div>
<div class="a" style="left:478px;top:449px;width:266px;height:0;border-top:1px dashed #c8c8c8"></div>
<div class="a" style="left:478px;top:588px;width:266px;height:0;border-top:1px dashed #c8c8c8"></div>
<div class="a" style="left:615px;top:172px;width:0;height:419px;border-left:1px dashed #c8c8c8"></div>
<!-- green selection -->

<!-- texts -->
<div class="t" style="left:541px;top:148px;font-size:19px;line-height:21px">1</div>
<div class="a" style="left:541px;top:164px;width:10px;height:2px;background:#000"></div>
<div class="t" style="left:677px;top:148px;font-size:19px;line-height:21px">2</div>
<div class="t" style="left:364px;top:228px;font-size:21px;line-height:24px;letter-spacing:0.5px">00003</div>
<div class="t" style="left:364px;top:367px;font-size:21px;line-height:24px;letter-spacing:0.5px">00004</div>
<div class="t" style="left:364px;top:506px;font-size:21px;line-height:24px;letter-spacing:0.5px">00005</div>


<!-- pane header icons -->
<svg class="a" style="left:315px;top:107px" width="8" height="10" viewBox="0 0 8 10" shape-rendering="crispEdges"><rect x="1" y="0" width="6" height="1" fill="#000"/><rect x="1" y="0" width="2" height="6" fill="#000"/><rect x="5" y="0" width="2" height="6" fill="#000"/><rect x="0" y="6" width="8" height="1" fill="#000"/><rect x="3" y="7" width="1" height="3" fill="#000"/></svg>
<svg class="a" style="left:330px;top:107px" width="11" height="10" viewBox="0 0 11 10"><path d="M1.5 0.5L9.5 8.5M9.5 0.5L1.5 8.5" stroke="#000" stroke-width="2.3"/></svg>
<!-- tab X -->
<svg class="a" style="left:407px;top:107px" width="11" height="10" viewBox="0 0 11 10"><path d="M1.5 0.5L9.5 8.5M9.5 0.5L1.5 8.5" stroke="#000" stroke-width="2.3"/></svg>
<!-- tooltip -->
<div class="a" style="left:451px;top:96px;width:235px;height:19px;background:rgba(0,0,0,0.18);filter:blur(1.2px)"></div>
<div class="a" style="left:448px;top:93px;width:235px;height:20px;background:#fff;border:1px solid #767676"></div>
<div class="t" style="left:455px;top:96px;color:#575757">Transfer to PLC -> Monitor mode(Ctrl+F8)</div>

</body></html>
